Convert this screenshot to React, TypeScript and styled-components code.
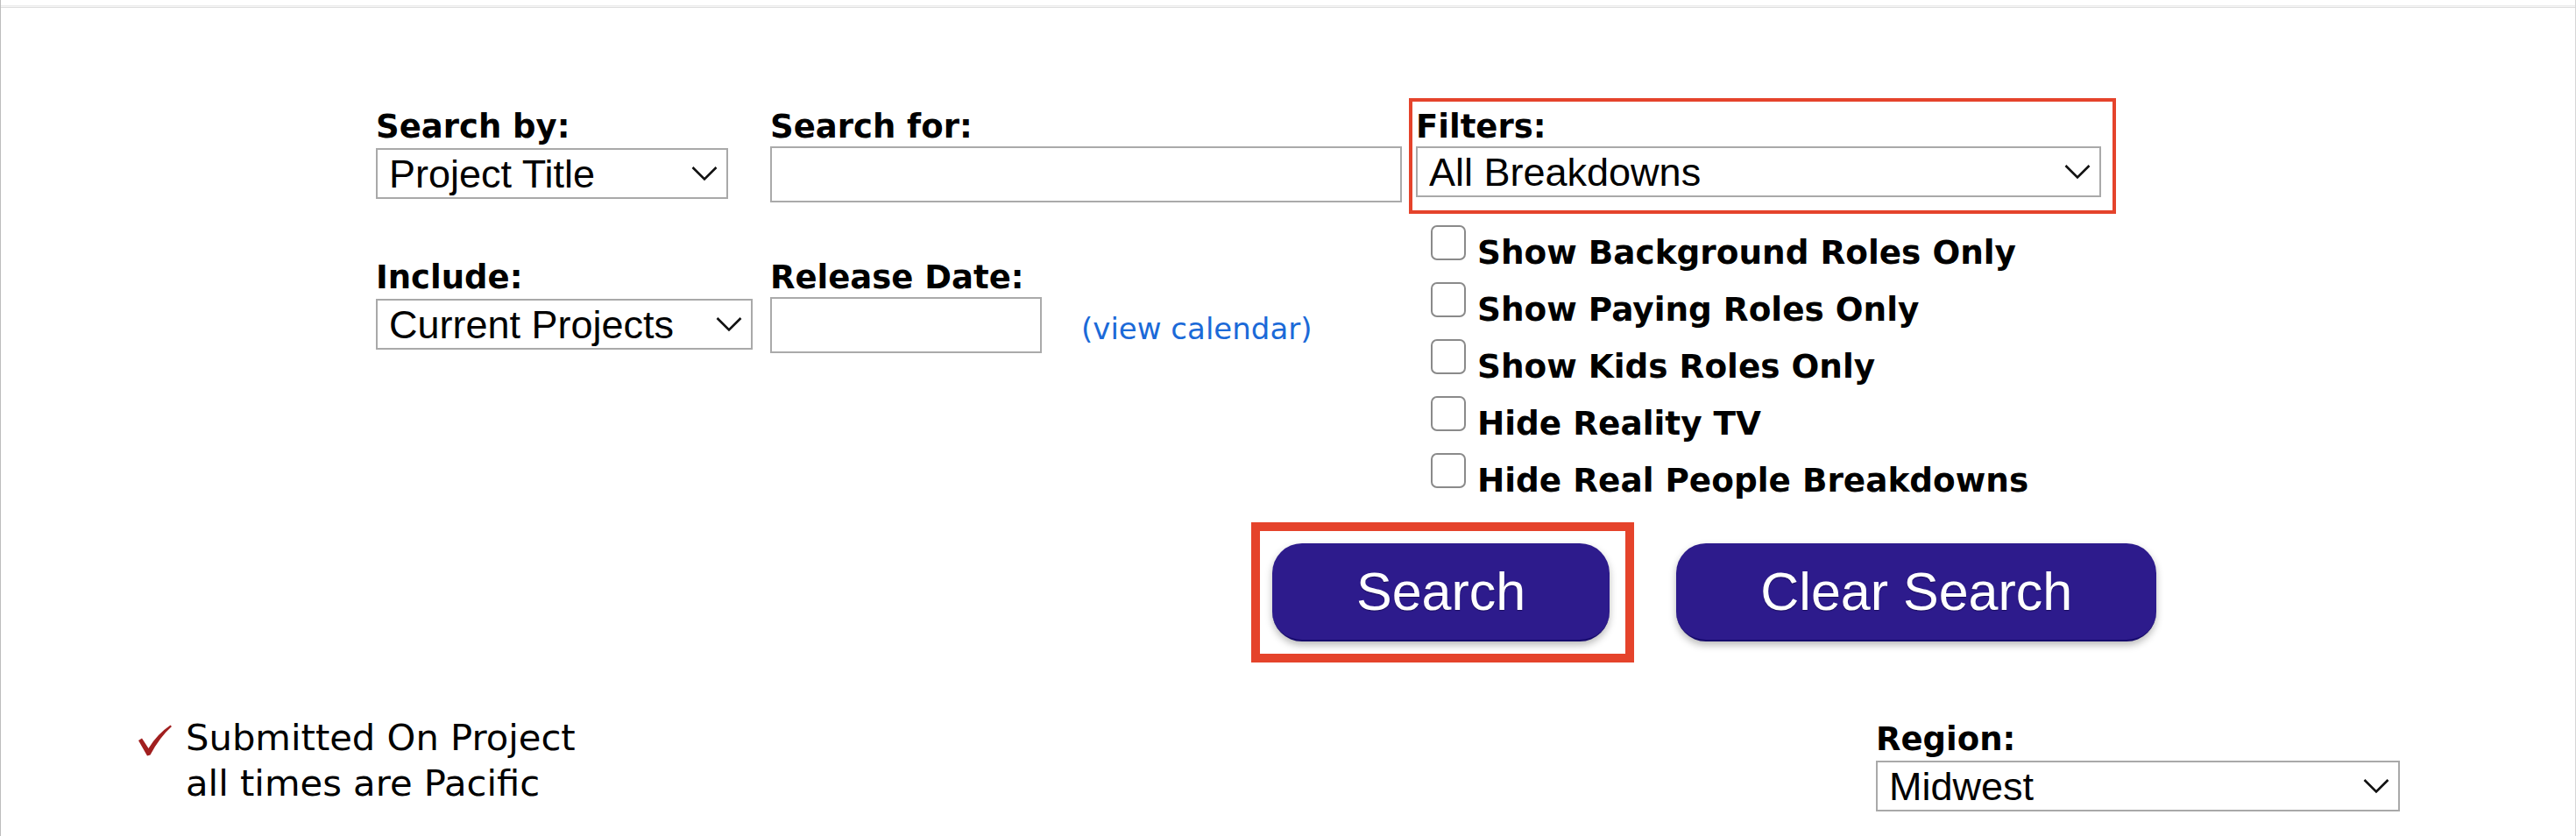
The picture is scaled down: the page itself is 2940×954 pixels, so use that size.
import React from "react";
import styled, { createGlobalStyle } from "styled-components";

const GlobalStyle = createGlobalStyle`
  html, body {
    margin: 0;
    padding: 0;
    background: #ffffff;
  }
  body {
    font-family: "DejaVu Sans", Verdana, sans-serif;
    color: #000;
  }
`;

const RED = "#e5432b";

const Page = styled.div`
  width: 2940px;
  height: 954px;
  box-sizing: border-box;
  border-left: 1px solid #bdbdbd;
  border-right: 1px solid #d6d6d6;
  overflow: hidden;
`;

const TopRule = styled.div`
  margin-top: 6px;
  height: 1px;
  border-top: 1px solid #ececec;
  border-bottom: 1px solid #dedede;
  background: #f4f4f4;
`;

const FormArea = styled.div`
  padding-left: 428px;
  margin-top: 103px;
`;

const TopRow = styled.div`
  display: flex;
  align-items: flex-start;
`;

const LeftGrid = styled.div`
  display: grid;
  grid-template-columns: 430px 721px;
  column-gap: 20px;
  row-gap: 66px;
  padding-top: 13px;
  margin-right: 8px;
`;

const Field = styled.div`
  display: flex;
  flex-direction: column;
  align-items: flex-start;
`;

const Label = styled.div`
  font-family: "DejaVu Sans", Verdana, sans-serif;
  font-weight: 700;
  font-size: 37px;
  line-height: 40px;
  margin-bottom: 2px;
  white-space: nowrap;
`;

const SelectBox = styled.div<{ $width: string }>`
  position: relative;
  width: ${(p) => p.$width};
  height: 58px;
  margin-top: 2px;

  svg {
    position: absolute;
    right: 12px;
    top: 50%;
    transform: translateY(-50%);
    pointer-events: none;
  }
`;

const Select = styled.select`
  appearance: none;
  -webkit-appearance: none;
  width: 100%;
  height: 100%;
  box-sizing: border-box;
  border: 2px solid #a9a9a9;
  border-radius: 0;
  background: #fff;
  color: #000;
  font-family: "Liberation Sans", Arial, sans-serif;
  font-size: 45px;
  padding: 0 50px 0 13px;
  margin: 0;
  outline: none;
`;

const TextInput = styled.input<{ $width: string }>`
  width: ${(p) => p.$width};
  height: 64px;
  box-sizing: border-box;
  border: 2px solid #aaaaaa;
  border-radius: 0;
  background: #fff;
  font-family: "Liberation Sans", Arial, sans-serif;
  font-size: 40px;
  padding: 0 10px;
  margin: 0;
  outline: none;
`;

const DateRow = styled.div`
  display: flex;
  align-items: center;
  gap: 45px;
`;

const CalendarLink = styled.a`
  font-family: "DejaVu Sans", Verdana, sans-serif;
  font-size: 34px;
  color: #1b6ad8;
  text-decoration: none;
  padding-top: 8px;
  white-space: nowrap;
  cursor: pointer;
`;

const FilterCol = styled.div`
  display: flex;
  flex-direction: column;
  width: 807px;
`;

const FilterBox = styled.div`
  border: 4px solid ${RED};
  padding: 9px 13px 15px 4px;
`;

const CheckList = styled.div`
  margin-top: 12px;
  padding-left: 25px;
  display: flex;
  flex-direction: column;
`;

const CheckRow = styled.label`
  display: flex;
  align-items: flex-start;
  gap: 13px;
  height: 65px;
`;

const CheckBox = styled.input`
  appearance: none;
  -webkit-appearance: none;
  width: 40px;
  height: 40px;
  margin: 1px 0 0 0;
  box-sizing: border-box;
  border: 2px solid #8a8a8a;
  border-radius: 7px;
  background: #fff;
  flex-shrink: 0;
`;

const CheckLabel = styled.span`
  font-family: "DejaVu Sans", Verdana, sans-serif;
  font-weight: 700;
  font-size: 37.4px;
  line-height: 65px;
  white-space: nowrap;
`;

const ButtonRow = styled.div`
  display: flex;
  align-items: center;
  gap: 48px;
  margin-top: 15px;
  padding-left: 999px;
`;

const Highlight = styled.div`
  border: 10px solid ${RED};
  padding: 14px 18px 14px 14px;
  display: flex;
`;

const ActionButton = styled.button`
  height: 112px;
  padding: 0 96px;
  border: none;
  border-bottom: 2px solid #160a6c;
  border-radius: 34px;
  background: #2d1b8c;
  color: #ffffff;
  font-family: "Liberation Sans", Arial, sans-serif;
  font-size: 61px;
  line-height: 1;
  white-space: nowrap;
  text-shadow: 0 1px 1px rgba(10, 0, 60, 0.6);
  box-shadow: 0 4px 8px rgba(0, 0, 0, 0.28);
  cursor: pointer;
`;

const BottomRow = styled.div`
  display: flex;
  justify-content: space-between;
  align-items: flex-start;
  margin-top: 60px;
  padding: 0 200px 0 157px;
`;

const Note = styled.div`
  display: flex;
  align-items: flex-start;
  gap: 16px;

  svg {
    margin-top: 11px;
    flex-shrink: 0;
  }
`;

const NoteText = styled.div`
  font-family: "DejaVu Sans", Verdana, sans-serif;
  font-size: 41.7px;
  line-height: 52px;
  white-space: nowrap;
`;

const RegionField = styled(Field)`
  margin-top: 8px;
`;

const Chevron = () => (
  <svg width="30" height="17" viewBox="0 0 30 17">
    <polyline points="1.5,1.5 15,15 28.5,1.5" fill="none" stroke="#111" strokeWidth="2.6" strokeLinejoin="miter" />
  </svg>
);

const Tick = () => (
  <svg width="38" height="36" viewBox="0 0 38 36">
    <path d="M0 18 L4 15.5 L11.5 27 Q21 11 36.5 0.5 L38 2 Q24 14.5 13.5 34.5 L10 35.5 Z" fill="#a11f1f" />
  </svg>
);

type DropProps = { width: string; value: string; options: string[] };

const Dropdown: React.FC<DropProps> = ({ width, value, options }) => (
  <SelectBox $width={width}>
    <Select defaultValue={value}>
      {options.map((o) => (
        <option key={o}>{o}</option>
      ))}
    </Select>
    <Chevron />
  </SelectBox>
);

const filters = [
  "Show Background Roles Only",
  "Show Paying Roles Only",
  "Show Kids Roles Only",
  "Hide Reality TV",
  "Hide Real People Breakdowns",
];

export default function App() {
  return (
    <>
      <GlobalStyle />
      <Page>
        <TopRule />
        <FormArea>
          <TopRow>
            <LeftGrid>
              <Field>
                <Label>Search by:</Label>
                <Dropdown width="402px" value="Project Title" options={["Project Title", "Casting Director", "Role"]} />
              </Field>
              <Field>
                <Label>Search for:</Label>
                <TextInput $width="721px" type="text" />
              </Field>
              <Field>
                <Label>Include:</Label>
                <Dropdown width="430px" value="Current Projects" options={["Current Projects", "All Projects"]} />
              </Field>
              <Field>
                <Label>Release Date:</Label>
                <DateRow>
                  <TextInput $width="310px" type="text" />
                  <CalendarLink>(view calendar)</CalendarLink>
                </DateRow>
              </Field>
            </LeftGrid>
            <FilterCol>
              <FilterBox>
                <Label>Filters:</Label>
                <Dropdown width="100%" value="All Breakdowns" options={["All Breakdowns", "My Breakdowns"]} />
              </FilterBox>
              <CheckList>
                {filters.map((f) => (
                  <CheckRow key={f}>
                    <CheckBox type="checkbox" />
                    <CheckLabel>{f}</CheckLabel>
                  </CheckRow>
                ))}
              </CheckList>
            </FilterCol>
          </TopRow>
          <ButtonRow>
            <Highlight>
              <ActionButton>Search</ActionButton>
            </Highlight>
            <ActionButton>Clear Search</ActionButton>
          </ButtonRow>
        </FormArea>
        <BottomRow>
          <Note>
            <Tick />
            <NoteText>
              Submitted On Project
              <br />
              all times are Pacific
            </NoteText>
          </Note>
          <RegionField>
            <Label>Region:</Label>
            <Dropdown width="598px" value="Midwest" options={["Midwest", "East", "West", "South"]} />
          </RegionField>
        </BottomRow>
      </Page>
    </>
  );
}
